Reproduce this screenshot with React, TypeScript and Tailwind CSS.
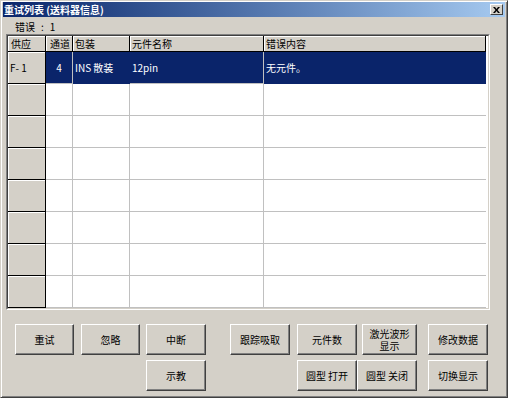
import React from 'react';

const FONT = "font-['Noto_Sans_CJK_SC','Noto_Sans',sans-serif]";

interface WinButtonProps {
  label: React.ReactNode;
  className?: string;
}

// Classic raised 3D push button
function WinButton({ label, className = '' }: WinButtonProps) {
  return (
    <button
      className={
        'h-[31px] shrink-0 flex items-center justify-center text-center bg-[#d4d0c8] text-black text-[10px] leading-[12px] border border-t-white border-l-white border-r-[#404040] border-b-[#404040] shadow-[inset_-1px_-1px_0_#808080] ' +
        className
      }
    >
      {label}
    </button>
  );
}

const headers = ['通道', '包装', '元件名称', '错误内容'];

export default function App() {
  const emptyRows = Array.from({ length: 7 });

  return (
    <div
      className={`${FONT} w-[508px] h-[398px] bg-[#d4d0c8] border border-t-[#d4d0c8] border-l-[#d4d0c8] border-r-[#404040] border-b-[#404040] shadow-[inset_1px_1px_0_#fff,inset_-1px_-1px_0_#808080] px-[2px] pt-[1px] flex flex-col select-none`}
    >
      {/* Title bar */}
      <div className="h-[15px] flex items-center justify-between bg-linear-to-r from-[#0a246a] to-[#a6caf0] pl-[1px] pr-[2px]">
        <span className="text-white font-bold text-[10px] leading-none">重试列表 (送料器信息)</span>
        <div className="w-[13px] h-[11px] bg-[#d4d0c8] border border-t-white border-l-white border-r-[#404040] border-b-[#404040] flex items-center justify-center">
          <svg width="7" height="6" viewBox="0 0 7 6">
            <path d="M0 0h2l1.5 2L5 0h2L4.5 3 7 6H5L3.5 4 2 6H0l2.5-3z" fill="#000" />
          </svg>
        </div>
      </div>

      {/* Error count */}
      <div className="h-[17px] pl-[12px] pt-[2px] flex items-center gap-[6px] text-[10px] text-black">
        <span>错误</span>
        <span>:</span>
        <span>1</span>
      </div>

      {/* Grid */}
      <div className="ml-[3px] w-[484px] border border-t-[#808080] border-l-[#808080] border-r-white border-b-white">
        <div className="border border-t-[#404040] border-l-[#404040] border-r-[#d4d0c8] border-b-[#d4d0c8] bg-white">
          <div className="grid grid-cols-[38px_27px_57px_134px_222px] text-[10px] text-black">
            {/* Header row */}
            <div className="h-[16px] bg-[#d4d0c8] border-r border-b border-black shadow-[inset_1px_1px_0_#fff] pl-[3px] flex items-center">
              供应
            </div>
            {headers.map((h, i) => (
              <div
                key={h}
                className={
                  'h-[16px] bg-[#d4d0c8] border-r border-b border-black shadow-[inset_1px_1px_0_#fff] flex items-center ' +
                  (i === 0 ? 'pl-[4px]' : 'pl-[2px]')
                }
              >
                {h}
              </div>
            ))}

            {/* Selected row */}
            <div className="h-[32px] bg-[#d4d0c8] border-r border-b border-black shadow-[inset_1px_1px_0_#fff] pl-[2px] flex items-center">
              F- 1
            </div>
            <div className="h-[32px] bg-[#0a246a] text-white border-r border-b border-[#c0c0c0] flex items-center justify-center">
              4
            </div>
            <div className="h-[32px] bg-[#0a246a] text-white border-r border-b border-[#0a246a] pl-[2px] flex items-center">
              INS 散装
            </div>
            <div className="h-[32px] bg-[#0a246a] text-white border-r border-b border-[#c0c0c0] pl-[2px] flex items-center">
              12pin
            </div>
            <div className="h-[32px] bg-[#0a246a] text-white border-b border-[#0a246a] pl-[2px] flex items-center">
              无元件。
            </div>

            {/* Empty rows */}
            {emptyRows.map((_, r) => (
              <React.Fragment key={r}>
                <div className="h-[32px] bg-[#d4d0c8] border-r border-b border-black shadow-[inset_1px_1px_0_#fff]" />
                <div className="h-[32px] border-r border-b border-[#c0c0c0]" />
                <div className="h-[32px] border-r border-b border-[#c0c0c0]" />
                <div className="h-[32px] border-r border-b border-[#c0c0c0]" />
                <div className="h-[32px] border-b border-[#c0c0c0]" />
              </React.Fragment>
            ))}
          </div>
        </div>
      </div>

      {/* Buttons */}
      <div className="mt-[14px] flex">
        <WinButton label="重试" className="ml-[12px] w-[59px]" />
        <WinButton label="忽略" className="ml-[7px] w-[59px]" />
        <WinButton label="中断" className="ml-[6px] w-[60px]" />
        <WinButton label="跟踪吸取" className="ml-[24px] w-[60px]" />
        <WinButton label="元件数" className="ml-[7px] w-[60px]" />
        <WinButton
          label={<span className="whitespace-pre-line">{'激光波形\n显示'}</span>}
          className="ml-[5px] w-[55px]"
        />
        <WinButton label="修改数据" className="ml-[11px] w-[60px]" />
      </div>
      <div className="mt-[5px] flex">
        <WinButton label="示教" className="ml-[143px] w-[60px]" />
        <WinButton label="圆型 打开" className="ml-[91px] w-[60px]" />
        <WinButton label="圆型 关闭" className="w-[60px]" />
        <WinButton label="切换显示" className="ml-[11px] w-[60px]" />
      </div>
    </div>
  );
}
